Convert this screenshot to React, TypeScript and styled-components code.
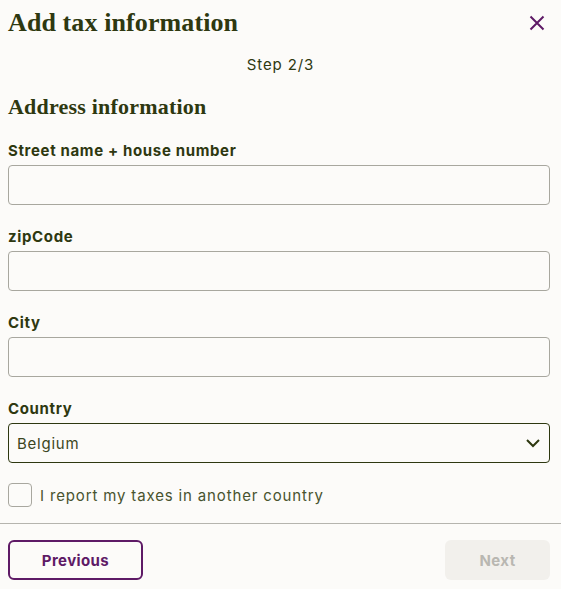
import React, { useState } from 'react';
import styled, { createGlobalStyle } from 'styled-components';

const GlobalStyle = createGlobalStyle`
  html, body {
    margin: 0;
    padding: 0;
    background: #fcfbf9;
  }
  * {
    box-sizing: border-box;
  }
`;

const ink = '#2e3810';
const plum = '#5e1a66';
const sans = "Inter, 'Open Sans', 'Liberation Sans', sans-serif";

const Dialog = styled.div`
  width: 561px;
  min-height: 589px;
  background: #fcfbf9;
  font-family: ${sans};
  color: ${ink};
  display: flex;
  flex-direction: column;
`;

const Header = styled.div`
  display: flex;
  align-items: center;
  justify-content: space-between;
  padding: 2px 15px 0 8px;
  height: 44px;
`;

const Title = styled.h1`
  margin: 0;
  font-family: 'Liberation Serif', serif;
  font-weight: 700;
  font-size: 26px;
  letter-spacing: 0.1px;
  color: ${ink};
`;

const CloseButton = styled.button`
  border: 0;
  background: none;
  padding: 0;
  width: 18px;
  height: 18px;
  display: flex;
  align-items: center;
  justify-content: center;
  cursor: pointer;
`;

const StepText = styled.div`
  text-align: center;
  font-size: 15px;
  line-height: 18px;
  margin-top: 12px;
  letter-spacing: 0.9px;
`;

const Body = styled.div`
  padding: 0 11px 0 8px;
  display: flex;
  flex-direction: column;
`;

const SectionTitle = styled.h2`
  margin: 21px 0 23px;
  font-family: 'Liberation Serif', serif;
  font-weight: 700;
  font-size: 22px;
  line-height: 24px;
  letter-spacing: 0.2px;
  color: ${ink};
`;

const Field = styled.div`
  display: flex;
  flex-direction: column;
  gap: 5px;
  margin-bottom: 23px;
`;

const Label = styled.label`
  font-size: 15px;
  font-weight: 700;
  line-height: 18px;
  letter-spacing: 0.65px;
`;

const TextInput = styled.input`
  height: 40px;
  width: 100%;
  border: 1px solid #a8a79f;
  border-radius: 4px;
  background: #fcfbf9;
  font: inherit;
  padding: 0 8px;
`;

const SelectBox = styled.div`
  height: 40px;
  border: 1px solid ${ink};
  border-radius: 4px;
  display: flex;
  align-items: center;
  justify-content: space-between;
  padding: 0 8px;
  font-size: 15px;
  letter-spacing: 0.75px;
  color: #3c4622;
`;

const CheckRow = styled.label`
  display: flex;
  align-items: center;
  gap: 8px;
  height: 24px;
  margin-top: -3px;
  font-size: 15px;
  letter-spacing: 0.85px;
  color: #48532e;
  cursor: pointer;
`;

const CheckBox = styled.span`
  width: 24px;
  height: 24px;
  border: 1px solid #a8a79f;
  border-radius: 4px;
  background: #fcfbf9;
`;

const Divider = styled.hr`
  margin: 16px 0 0;
  border: 0;
  border-top: 1px solid #b5b4ae;
  width: 100%;
`;

const Footer = styled.div`
  display: flex;
  justify-content: space-between;
  padding: 16px 11px 0 8px;
`;

const Button = styled.button<{ $variant: 'outline' | 'disabled' }>`
  height: 40px;
  border-radius: 6px;
  font-family: ${sans};
  font-weight: 700;
  font-size: 15px;
  letter-spacing: 0.4px;
  cursor: ${(p) => (p.$variant === 'disabled' ? 'default' : 'pointer')};
  border: ${(p) => (p.$variant === 'outline' ? `2px solid ${plum}` : '0')};
  background: ${(p) => (p.$variant === 'outline' ? 'transparent' : '#f2f0ec')};
  color: ${(p) => (p.$variant === 'outline' ? plum : '#b9b7b1')};
  width: ${(p) => (p.$variant === 'outline' ? '135px' : '105px')};
`;

export default function App() {
  const [other, setOther] = useState(false);
  return (
    <Dialog>
      <GlobalStyle />
      <Header>
        <Title>Add tax information</Title>
        <CloseButton aria-label="Close">
          <svg width="16" height="16" viewBox="0 0 16 16">
            <path d="M1.5 1.5L14.5 14.5M14.5 1.5L1.5 14.5" stroke={plum} strokeWidth="2" />
          </svg>
        </CloseButton>
      </Header>
      <StepText>Step 2/3</StepText>
      <Body>
        <SectionTitle>Address information</SectionTitle>
        <Field>
          <Label>Street name + house number</Label>
          <TextInput />
        </Field>
        <Field>
          <Label>zipCode</Label>
          <TextInput />
        </Field>
        <Field>
          <Label>City</Label>
          <TextInput />
        </Field>
        <Field>
          <Label>Country</Label>
          <SelectBox>
            <span>Belgium</span>
            <svg width="16" height="10" viewBox="0 0 16 10">
              <path d="M2 2L8 8L14 2" stroke={ink} strokeWidth="2" fill="none" />
            </svg>
          </SelectBox>
        </Field>
        <CheckRow onClick={() => setOther(!other)}>
          <CheckBox />
          I report my taxes in another country
        </CheckRow>
      </Body>
      <Divider />
      <Footer>
        <Button $variant="outline">Previous</Button>
        <Button $variant="disabled" disabled>
          Next
        </Button>
      </Footer>
    </Dialog>
  );
}
